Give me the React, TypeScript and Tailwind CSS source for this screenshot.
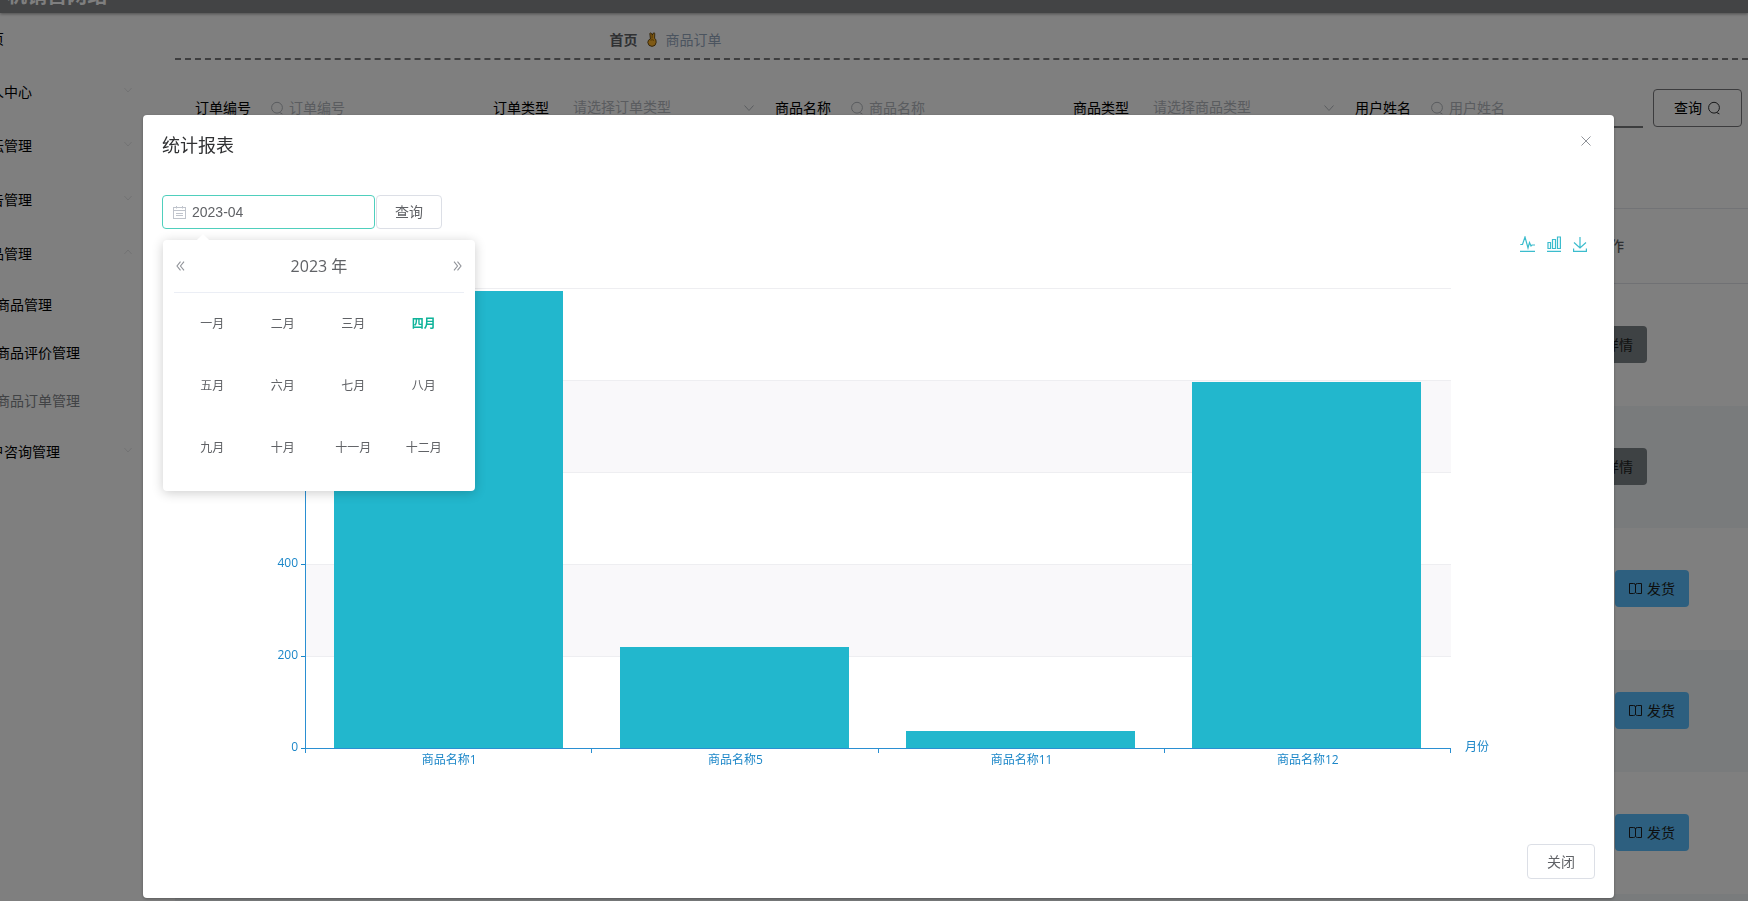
import { useState } from "react";

const menu = [
  { label: "个人中心", open: false },
  { label: "论坛管理", open: false },
  { label: "公告管理", open: false },
  { label: "商品管理", open: true },
];

const subMenu = [
  { label: "商品管理", active: false },
  { label: "商品评价管理", active: false },
  { label: "商品订单管理", active: true },
];

const filters = [
  { id: "orderNo", label: "订单编号", type: "input", placeholder: "订单编号" },
  { id: "orderType", label: "订单类型", type: "select", placeholder: "请选择订单类型" },
  { id: "goodsName", label: "商品名称", type: "input", placeholder: "商品名称" },
  { id: "goodsType", label: "商品类型", type: "select", placeholder: "请选择商品类型" },
  { id: "userName", label: "用户姓名", type: "input", placeholder: "用户姓名" },
];

const orders = [
  { id: 1, paid: false },
  { id: 2, paid: false },
  { id: 3, paid: true },
  { id: 4, paid: true },
  { id: 5, paid: true },
  { id: 6, paid: true },
];

const months = [
  "一月", "二月", "三月", "四月",
  "五月", "六月", "七月", "八月",
  "九月", "十月", "十一月", "十二月",
];

const sales = [
  { name: "商品名称1", value: 993 },
  { name: "商品名称5", value: 220 },
  { name: "商品名称11", value: 37 },
  { name: "商品名称12", value: 796 },
];

function SearchIcon({ className }: { className?: string }) {
  return (
    <svg className={className} width="14" height="14" viewBox="0 0 14 14" fill="none" stroke="currentColor">
      <circle cx="7" cy="6.7" r="5.4" />
      <path d="M9.4 11.4L12.4 12.9" />
    </svg>
  );
}

function Chevron({ up, size = 8 }: { up?: boolean; size?: number }) {
  return (
    <svg width={size} height={size} viewBox="0 0 10 10" fill="none" stroke="currentColor">
      <path d={up ? "M0.5 7.5L5 2.5L9.5 7.5" : "M0.5 2.5L5 7.5L9.5 2.5"} />
    </svg>
  );
}

function BookIcon() {
  return (
    <svg width="13" height="13" viewBox="0 0 13 13" fill="none" stroke="currentColor">
      <path d="M6.5 2.5V10.5M0.5 1.5H4.5Q6.5 1.5 6.5 3Q6.5 1.5 8.5 1.5H12.5V11.5H8.5Q7.5 11.5 6.5 10.5Q5.5 11.5 4.5 11.5H0.5Z" />
    </svg>
  );
}

function CalendarIcon() {
  return (
    <svg width="13" height="13" viewBox="0 0 13 13" fill="none" stroke="currentColor">
      <rect x="0.5" y="1.5" width="12" height="11" />
      <path d="M0.5 4.5H12.5M3.5 0V2.5M9.5 0V2.5M3 7.5H10M3 9.5H10" />
    </svg>
  );
}

function FingersIcon() {
  return (
    <svg width="10" height="15" viewBox="0 0 10 15">
      <path
        d="M3.4 7L2.8 1.4Q3.6 0.4 4.6 1.5L5.3 3L6.2 1.2Q7.3 0.3 7.8 1.4L7.6 6.2Q9.4 7.4 9.2 10.4Q8.8 14.3 5 14.4Q1.2 14.3 0.8 10.6Q0.7 7.8 3.4 7Z"
        fill="#ffb42a"
        stroke="#4a3000"
        strokeWidth="0.8"
      />
      <path d="M5.2 3L5 6.5M3.4 8.2Q5.4 7.2 7 8.4" stroke="#8a5a00" strokeWidth="0.8" fill="none" />
    </svg>
  );
}

function Sidebar() {
  return (
    <aside className="w-[175px] shrink-0 overflow-hidden">
      <nav className="-ml-6 text-sm text-black">
        <a href="#home" className="flex h-[52px] items-center">首页</a>
        {menu.map((item) => (
          <a key={item.label} href="#menu" className="flex h-[54px] items-center justify-between pr-[43px]">
            {item.label}
            <span className="mb-1 text-[#dddee0]"><Chevron up={item.open} /></span>
          </a>
        ))}
        {subMenu.map((item) => (
          <a
            key={item.label}
            href="#sub"
            className={item.active ? "flex h-12 items-center pl-5 text-[#83868b]" : "flex h-12 items-center pl-5"}
          >
            {item.label}
          </a>
        ))}
        <a href="#menu" className="flex h-[54px] items-center justify-between pr-[43px]">
          客户咨询管理
          <span className="mb-1 text-[#dddee0]"><Chevron /></span>
        </a>
      </nav>
    </aside>
  );
}

function FilterBar() {
  return (
    <form className="flex items-center gap-[10px] pt-7 pl-5">
      {filters.map((f) => (
        <div key={f.id} className="flex items-center">
          <label htmlFor={f.id} className="w-[68px] text-sm text-black">{f.label}</label>
          {f.type === "input" ? (
            <div className="relative w-[220px]">
              <SearchIcon className="absolute top-[13px] left-[7px] text-[#b4b8be]" />
              <input
                id={f.id}
                placeholder={f.placeholder}
                className="h-10 w-full border-b-2 border-[#787a7d] bg-transparent pl-[26px] text-sm placeholder:text-[#b4b8be]"
              />
            </div>
          ) : (
            <div className="relative w-[204px]">
              <select
                id={f.id}
                className="h-10 w-full appearance-none border-b-2 border-[#787a7d] bg-transparent pl-3 text-sm text-[#b4b8be]"
              >
                <option>{f.placeholder}</option>
              </select>
              <span className="absolute top-[15px] right-[11px] text-[#b4b8be]"><Chevron size={10} /></span>
            </div>
          )}
        </div>
      ))}
      <button
        type="button"
        className="flex h-[38px] w-[89px] items-center justify-center gap-[5px] rounded border border-[#78797c] text-sm text-black"
      >
        查询
        <SearchIcon className="text-[#303133]" />
      </button>
    </form>
  );
}

function OrderTable() {
  return (
    <table className="mt-20 w-full border-t border-[#e4e6ec] text-sm">
      <thead>
        <tr className="h-[75px] border-b border-[#e0e2e8]">
          <td />
          <th className="w-[276px] text-center font-medium text-[#606266]">操作</th>
        </tr>
      </thead>
      <tbody>
        {orders.map((order) => (
          <tr key={order.id} className="h-[122px] even:bg-[#f2f6f8]">
            <td />
            <td>
              <div className="flex justify-center gap-[10px]">
                <button className="flex h-[37px] w-[74px] items-center justify-center gap-[5px] rounded bg-[#7c8488] text-[#1c1e20]">
                  <BookIcon />
                  详情
                </button>
                {order.paid && (
                  <button className="flex h-[37px] w-[74px] items-center justify-center gap-[5px] rounded bg-[#5abfff] text-[#1c1e20]">
                    <BookIcon />
                    发货
                  </button>
                )}
              </div>
            </td>
          </tr>
        ))}
      </tbody>
    </table>
  );
}

function MonthPicker({ month, onPick }: { month: number; onPick: (m: number) => void }) {
  return (
    <div className="absolute top-[45px] left-px z-10 h-[251px] w-[312px] rounded bg-white shadow-[0_2px_12px_rgba(0,0,0,0.2)]">
      <div className="absolute -top-1 left-[35px] h-[10px] w-[10px] rotate-45 bg-white" />
      <div className="mx-[11px] flex h-[53px] items-center justify-between border-b border-[#ebeef5] text-[#909399]">
        <button aria-label="前一年" className="ml-[2px]">
          <svg width="9" height="10" viewBox="0 0 9 10" fill="none" stroke="currentColor" strokeWidth="1.1">
            <path d="M4.5 0.7L1 5L4.5 9.3M8 0.7L4.5 5L8 9.3" />
          </svg>
        </button>
        <span className="text-base text-[#606266]">2023 年</span>
        <button aria-label="后一年" className="mr-[2px]">
          <svg width="9" height="10" viewBox="0 0 9 10" fill="none" stroke="currentColor" strokeWidth="1.1">
            <path d="M1 0.7L4.5 5L1 9.3M4.5 0.7L8 5L4.5 9.3" />
          </svg>
        </button>
      </div>
      <div className="grid grid-cols-4 pr-4 pl-[14px]">
        {months.map((m, i) => (
          <button
            key={m}
            onClick={() => onPick(i + 1)}
            className={
              i + 1 === month
                ? "h-[62px] text-xs font-bold text-[#0fb39a]"
                : "h-[62px] text-xs text-[#606266]"
            }
          >
            {m}
          </button>
        ))}
      </div>
    </div>
  );
}

function SalesChart() {
  const left = 144;
  const right = 1289;
  const bottom = 496;
  const step = 92;
  const slot = (right - left) / sales.length;
  const ticks = [0, 200, 400, 600, 800, 1000];
  const y = (v: number) => bottom - (v / 200) * step;

  return (
    <svg viewBox="0 0 1433 592" className="block w-full" fontSize="12">
      <rect x={left} y={y(400)} width={right - left} height={step} fill="#f9f8fa" />
      <rect x={left} y={y(800)} width={right - left} height={step} fill="#f9f8fa" />
      {ticks.map((t) => (
        <g key={t}>
          <line x1={left} x2={right} y1={y(t) + 0.5} y2={y(t) + 0.5} stroke="#eeeef1" />
          <line x1={left - 5} x2={left} y1={y(t) + 0.5} y2={y(t) + 0.5} stroke="#1b86c8" />
          {/* the month picker covers the upper labels */}
          {t <= 400 && (
            <text x={left - 8} y={y(t) + 3} textAnchor="end" fill="#1b86c8">{t}</text>
          )}
        </g>
      ))}
      {sales.map((s, i) => (
        <g key={s.name}>
          <rect
            x={Math.round(left - 1 + slot * (i + 0.1))}
            y={Math.round(y(s.value))}
            width={Math.round(slot * 0.8)}
            height={bottom - Math.round(y(s.value))}
            fill="#22b7cd"
          />
          <text x={left + slot * (i + 0.5)} y={bottom + 16} textAnchor="middle" fill="#1b86c8">{s.name}</text>
        </g>
      ))}
      <g stroke="#2a8fd2">
        <line x1={left - 0.5} x2={left - 0.5} y1={y(1000)} y2={bottom} />
        <line x1={left - 1} x2={right} y1={bottom + 0.5} y2={bottom + 0.5} />
        {[0, 1, 2, 3, 4].map((i) => (
          <line key={i} x1={Math.round(left + slot * i) - 0.5} x2={Math.round(left + slot * i) - 0.5} y1={bottom} y2={bottom + 5} />
        ))}
      </g>
      <text x={right + 14} y={bottom + 3} fill="#1b86c8">月份</text>
    </svg>
  );
}

function Toolbox() {
  return (
    <div className="flex justify-end gap-3 pt-[7px] pr-2 text-[#3bbccd]">
      <button aria-label="切换为折线图">
        <svg width="15" height="16" viewBox="0 0 15 16" fill="none" stroke="currentColor" strokeWidth="1.2">
          <path d="M0 15.4H15M0.3 8.5H2.5L5 1L8 12L9.5 6.5L11 10L12 9H15" />
        </svg>
      </button>
      <button aria-label="切换为柱状图">
        <svg width="14" height="16" viewBox="0 0 14 16" fill="none" stroke="currentColor" strokeWidth="1.2">
          <path d="M0 15.4H14M1 6.5H3.5V12.5H1ZM5.5 3.5H8.5V12.5H5.5ZM10.5 1H13.4V12.5H10.5Z" />
        </svg>
      </button>
      <button aria-label="保存为图片">
        <svg width="14" height="16" viewBox="0 0 14 16" fill="none" stroke="currentColor" strokeWidth="1.2">
          <path d="M7 1V12M1 6.5L7 12L13 6.5M0.6 12.5V15.4H13.4V12.5" />
        </svg>
      </button>
    </div>
  );
}

function ReportDialog() {
  const [month, setMonth] = useState(4);

  return (
    <div className="fixed inset-0 bg-black/50 pt-[115px] pr-[134px] pl-[143px]">
      <div role="dialog" aria-label="统计报表" className="rounded-sm bg-white px-[19px] pb-[19px] shadow-[0_1px_3px_rgba(0,0,0,0.3)]">
        <div className="flex items-start justify-between pt-[17px]">
          <h2 className="text-lg leading-[26px] text-[#303133]">统计报表</h2>
          <button aria-label="关闭" className="pt-1 pr-1 text-[#909399]">
            <svg width="10" height="10" viewBox="0 0 10 10" fill="none" stroke="currentColor">
              <path d="M0.5 0.5L9.5 9.5M9.5 0.5L0.5 9.5" />
            </svg>
          </button>
        </div>
        <div className="relative mt-[37px] flex gap-px">
          <div className="relative w-[213px]">
            <span className="absolute top-[11px] left-[11px] text-[#c0c4cc]"><CalendarIcon /></span>
            <input
              aria-label="月份"
              readOnly
              value={`2023-${String(month).padStart(2, "0")}`}
              className="h-[34px] w-full rounded border border-[#4fcfbd] pl-[29px] font-['Liberation_Sans',sans-serif] text-sm text-[#606266] outline-none"
            />
          </div>
          <button className="h-[34px] w-[66px] rounded border border-[#dcdfe6] text-sm text-[#606266]">查询</button>
          <MonthPicker month={month} onPick={setMonth} />
        </div>
        <Toolbox />
        <SalesChart />
        <div className="flex justify-end">
          <button className="h-[35px] w-[68px] rounded border border-[#dcdfe6] text-sm text-[#606266]">关闭</button>
        </div>
      </div>
    </div>
  );
}

export default function App() {
  return (
    <div className="h-screen overflow-hidden bg-white font-['Open_Sans','Noto_Sans_CJK_SC',sans-serif]">
      <header className="relative h-[13px] overflow-hidden bg-[#86888a] shadow-[0_1px_3px_rgba(0,0,0,0.4)]">
        <h1 className="-mt-[23px] -ml-[13px] flex h-[38px] items-center text-xl font-bold text-white">手机销售网站</h1>
      </header>
      <div className="flex">
        <Sidebar />
        <main className="min-w-0 flex-1">
          <div className="flex h-[47px] items-center justify-center gap-[9px] border-b-2 border-dashed border-[#7c7c7e] pt-2 pr-[592px] text-sm">
            <a href="#home" className="font-bold text-[#606266]">首页</a>
            <FingersIcon />
            <span className="text-[#97a8be]">商品订单</span>
          </div>
          <FilterBar />
          <OrderTable />
        </main>
      </div>
      <ReportDialog />
    </div>
  );
}
